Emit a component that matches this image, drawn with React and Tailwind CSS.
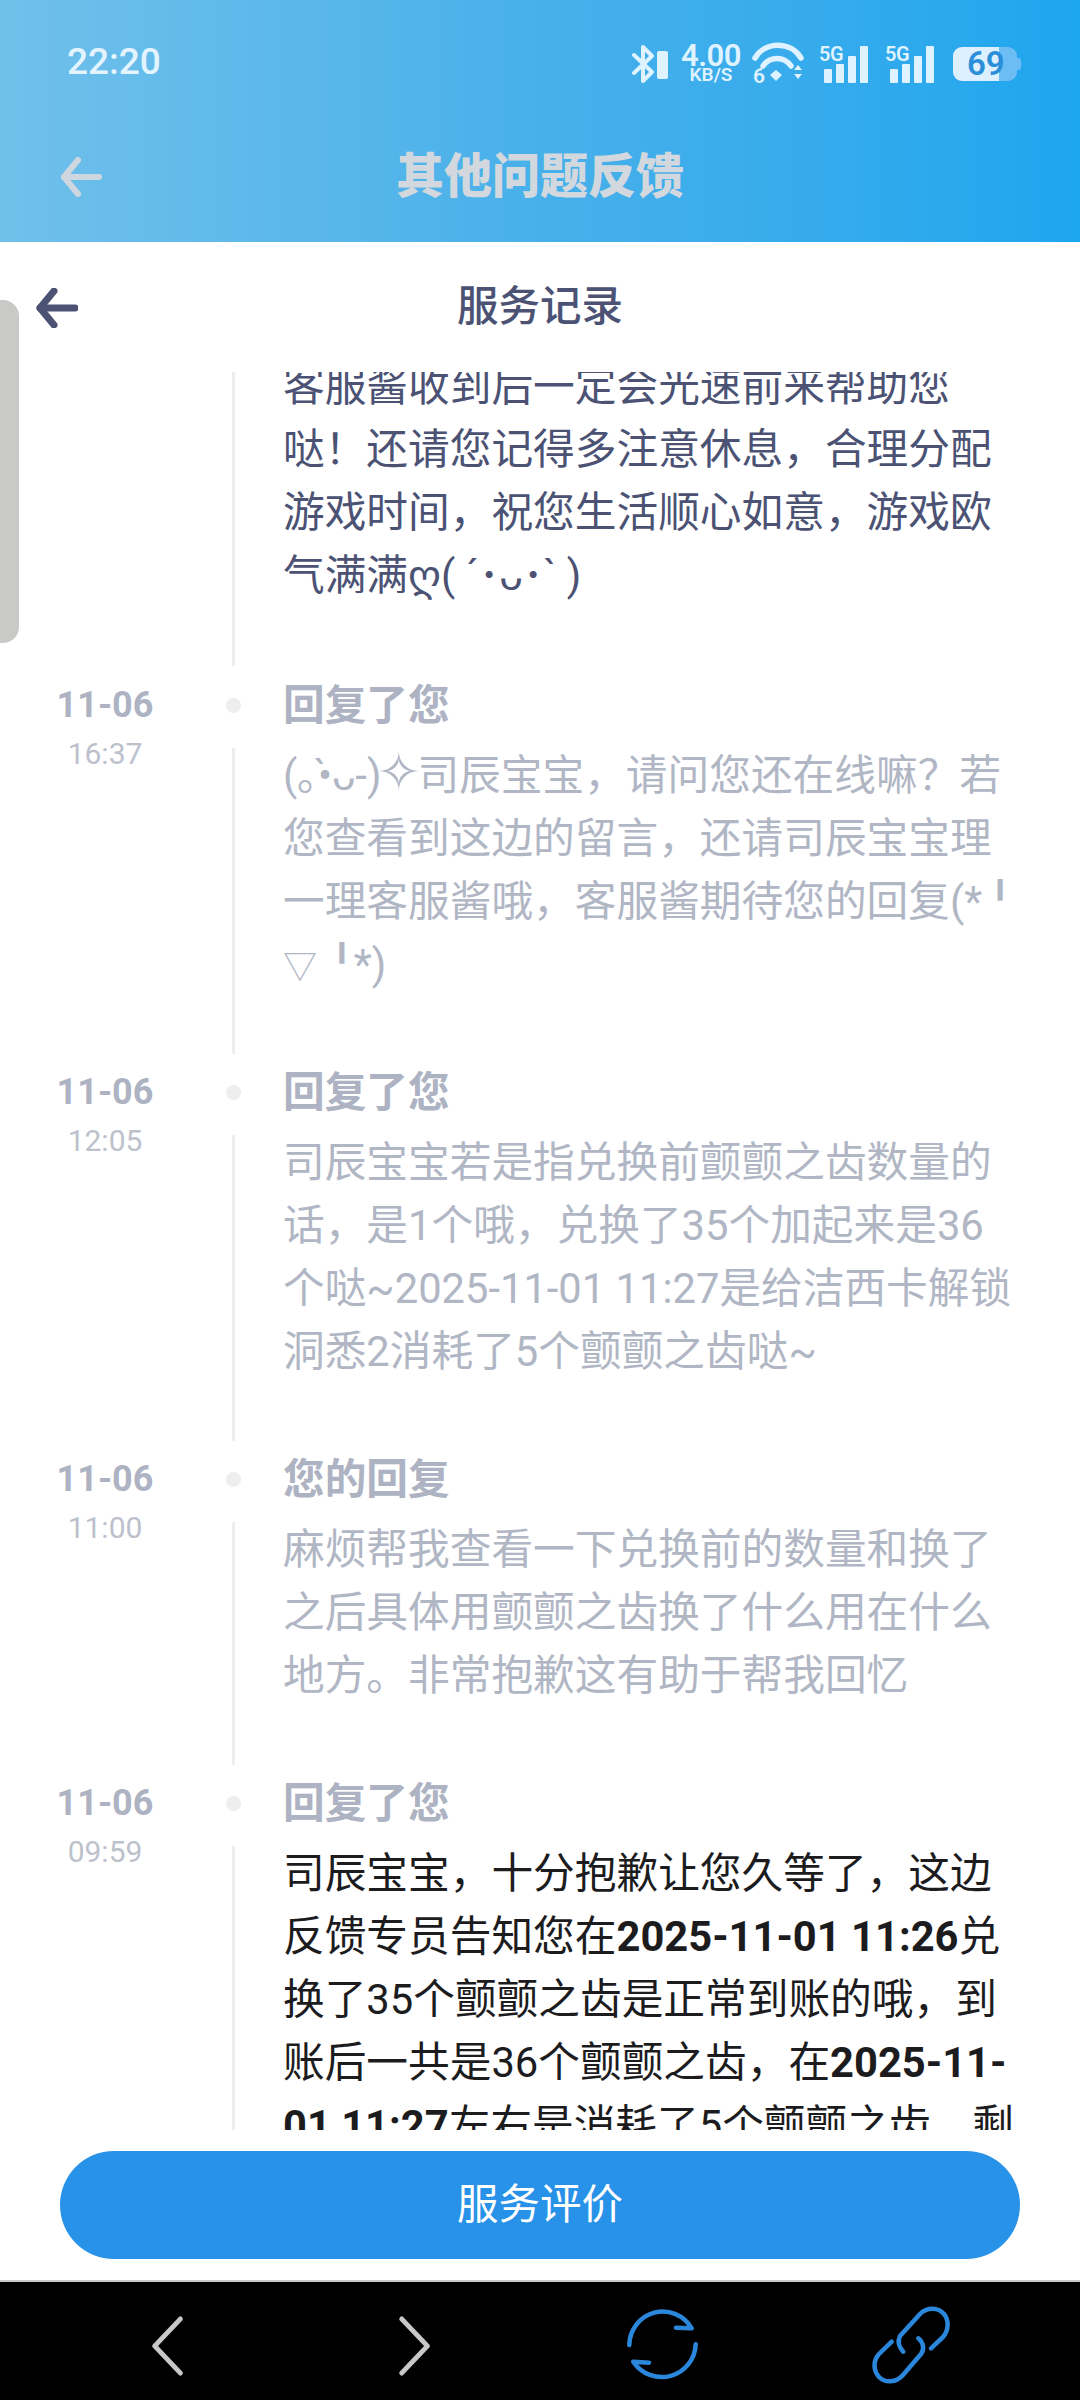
const FONT = { fontFamily: 'Roboto, "Noto Sans CJK SC", sans-serif' };

function Arrow({ color, width = 42, height = 40, sw = 6 }) {
  return (
    <svg width={width} height={height} viewBox="0 0 42 40" fill="none" stroke={color} strokeWidth={sw} strokeLinecap="round" strokeLinejoin="round">
      <path d="M39 20H4" />
      <path d="M18 3 4 20l14 17" />
    </svg>
  );
}

function Bars() {
  return (
    <svg width="50" height="37" viewBox="0 0 50 37" fill="#dff2ff">
      <rect x="5" y="23" width="8" height="14" rx="1" />
      <rect x="17" y="18" width="8" height="19" rx="1" />
      <rect x="29" y="10" width="8" height="27" rx="1" />
      <rect x="41" y="0" width="8" height="37" rx="1" />
    </svg>
  );
}

function StatusIcons() {
  return (
    <div className="flex items-center text-[#dff2ff]">
      <svg width="37" height="38" viewBox="0 0 37 38" fill="none" className="mr-[12px]">
        <path d="M2 10 20 27 11 36V2l9 9L2 28" stroke="#dff2ff" strokeWidth="4" strokeLinejoin="round" strokeLinecap="round" />
        <rect x="25" y="6" width="11" height="28" rx="2" fill="#dff2ff" />
      </svg>
      <div className="flex flex-col items-center w-[60px] font-semibold mr-[11px]">
        <span className="text-[31px] leading-[22px] tracking-[-0.5px]">4.00</span>
        <span className="text-[19px] leading-[16px]">KB/S</span>
      </div>
      <div className="relative w-[52px] h-[40px] mr-[15px]">
        <svg width="52" height="40" viewBox="0 0 52 40" fill="none" stroke="#dff2ff" strokeWidth="5.5" strokeLinecap="round" className="overflow-visible">
          <path d="M3 14C13 -3 39 -3 49 14" />
          <path d="M11 22c7-10 21-10 28 0" />
          <path d="M18 31l6-5 6 5-6 6z" fill="#dff2ff" stroke="none" />
          <path d="M46 21l-4 5h8zM46 35l-4-5h8z" fill="#dff2ff" stroke="none" />
        </svg>
        <span className="absolute left-[1px] top-[22px] text-[21px] leading-[20px] font-semibold">6</span>
      </div>
      <div className="relative w-[51px] h-[37px] mr-[15px]">
        <Bars />
        <span className="absolute left-0 top-0 text-[20px] leading-[17px] font-semibold tracking-[-0.5px]">5G</span>
      </div>
      <div className="relative w-[51px] h-[37px] mr-[17px]">
        <Bars />
        <span className="absolute left-0 top-0 text-[20px] leading-[17px] font-semibold tracking-[-0.5px]">5G</span>
      </div>
      <div className="relative w-[64px] h-[34px] rounded-[9px] bg-[#6cbdf4]">
        <div className="absolute left-0 top-0 bottom-0 w-[46px] rounded-l-[9px] bg-[#dcf0ff]" />
        <span className="absolute left-[14px] top-0 text-[33px] leading-[34px] font-semibold text-[#2a8fd8]">69</span>
        <div className="absolute right-[-4px] top-[11px] w-[4px] h-[12px] rounded-r-[3px] bg-[#6cbdf4]" />
      </div>
    </div>
  );
}

function Line({ parts, cls }) {
  return (
    <div className={"whitespace-nowrap h-[63px] leading-[63px] " + cls}>
      {parts.map((p, i) => {
        if (typeof p === "string") return <span key={i}>{p}</span>;
        if (p.b) return <b key={i} className="font-bold">{p.b}</b>;
        return <span key={i} className={p.c}>{p.s}</span>;
      })}
    </div>
  );
}

const ITEMS = [
  {
    date: "11-06", time: "16:37", title: "回复了您",
    lines: [
      ["(｡•̀ᴗ-)", { s: "✧", c: "text-[52px] leading-[40px] -mx-[4px]" }, "司辰宝宝，请问您还在线嘛？若"],
      ["您查看到这边的留言，还请司辰宝宝理"],
      ["一理客服酱哦，客服酱期待您的回复(*", { s: "╹", c: "-ml-[3px]" }],
      [{ s: "▽", c: "text-[34px] mr-[4px]" }, { s: "╹", c: "tracking-[-10px]" }, { s: "*)", c: "ml-[1px]" }],
    ],
    color: "text-[#b0b6c4]",
  },
  {
    date: "11-06", time: "12:05", title: "回复了您",
    lines: [["司辰宝宝若是指兑换前颤颤之齿数量的"], ["话，是1个哦，兑换了35个加起来是36"], ["个哒~2025-11-01 11:27是给洁西卡解锁"], ["洞悉2消耗了5个颤颤之齿哒~"]],
    color: "text-[#b0b6c4]",
  },
  {
    date: "11-06", time: "11:00", title: "您的回复",
    lines: [["麻烦帮我查看一下兑换前的数量和换了"], ["之后具体用颤颤之齿换了什么用在什么"], ["地方。非常抱歉这有助于帮我回忆"]],
    color: "text-[#b0b6c4]",
  },
  {
    date: "11-06", time: "09:59", title: "回复了您",
    lines: [
      ["司辰宝宝，十分抱歉让您久等了，这边"],
      ["反馈专员告知您在", { b: "2025-11-01 11:26" }, "兑"],
      ["换了35个颤颤之齿是正常到账的哦，到"],
      ["账后一共是36个颤颤之齿，在", { b: "2025-11-" }],
      [{ b: "01 11:27" }, "左右是消耗了5个颤颤之齿，剩"],
      ["余31个颤颤之齿哦"],
    ],
    color: "text-[#1c1c1e]",
  },
];

function Item({ item }) {
  return (
    <div className="flex">
      <div className="w-[210px] shrink-0 flex flex-col items-center pt-[9px]">
        <div className="text-[36px] leading-[44px] font-bold text-[#adb3c2]">{item.date}</div>
        <div className="text-[30px] leading-[44px] mt-[5px] text-[#bcc1cc]">{item.time}</div>
      </div>
      <div className="w-[46px] shrink-0 flex flex-col items-center pt-[24px] pb-[7px]">
        <div className="w-[15px] h-[15px] rounded-full bg-[#eeeeee] shrink-0" />
        <div className="w-[3px] flex-1 mt-[35px] bg-[#eeeeee]" />
      </div>
      <div className="ml-[27px] pb-[65px] text-[41.7px]">
        <div className="h-[70px] leading-[63px] font-bold text-[#adb3c2]">{item.title}</div>
        {item.lines.map((l, i) => <Line key={i} parts={l} cls={item.color} />)}
      </div>
    </div>
  );
}

export default function App() {
  return (
    <div className="w-[1080px] h-[2400px] flex flex-col bg-white overflow-hidden relative" style={FONT}>
      <header className="h-[242px] shrink-0 bg-gradient-to-r from-[#70c0ea] via-[#47b0ea] to-[#1da6ee]">
        <div className="h-[118px] pl-[67px] pr-[63px] flex items-start justify-between">
          <span className="mt-[40px] text-[37px] leading-[44px] font-medium text-[#e3f4ff]">22:20</span>
          <div className="mt-[44px]"><StatusIcons /></div>
        </div>
        <div className="h-[118px] relative flex items-center justify-center">
          <div className="absolute left-[60px] top-[39px]"><Arrow color="#ced7df" /></div>
          <span className="text-[48px] leading-[60px] font-black text-[#d2d8de]">其他问题反馈</span>
        </div>
      </header>

      <main className="flex-1 min-h-0 flex flex-col relative">
        <div className="absolute left-0 top-[58px] w-[19px] h-[343px] bg-[#c9c9c7] rounded-r-[16px]" />
        <div className="h-[130px] shrink-0 relative flex items-center justify-center">
          <div className="absolute left-[36px] top-[46px]"><Arrow color="#4b5274" sw={7} /></div>
          <span className="text-[41.5px] leading-[60px] font-medium text-[#4b5274]">服务记录</span>
        </div>
        <div className="flex-1 min-h-0 overflow-hidden">
          <div className="flex h-[302px]">
            <div className="w-[210px] shrink-0" />
            <div className="w-[46px] shrink-0 flex flex-col items-center pb-[8px]">
              <div className="w-[3px] flex-1 bg-[#eeeeee]" />
            </div>
            <div className="ml-[27px] -mt-[17px] text-[41.7px]">
              {[["客服酱收到后一定会光速前来帮助您"], ["哒！还请您记得多注意休息，合理分配"], ["游戏时间，祝您生活顺心如意，游戏欧"], ["气满满ღ( ´･ᴗ･` )"]].map((l, i) => (
                <Line key={i} parts={l} cls="text-[#4b5274]" />
              ))}
            </div>
          </div>
          {ITEMS.map((it, i) => <Item key={i} item={it} />)}
        </div>
        <div className="h-[150px] shrink-0 px-[60px] pt-[21px]">
          <button className="w-full h-[108px] rounded-full bg-[#2892e8] text-white text-[41.5px]">服务评价</button>
        </div>
      </main>

      <nav className="h-[120px] shrink-0 bg-black border-t-2 border-[#c9c9c9] relative flex items-center">
        <svg className="absolute left-[148px] top-[34px]" width="38" height="60" viewBox="0 0 38 60" fill="none" stroke="#c8c8c8" strokeWidth="5" strokeLinecap="round" strokeLinejoin="round">
          <path d="M33 3 6 30l27 27" transform="translate(1 0) scale(0.95 1)" />
        </svg>
        <svg className="absolute left-[396px] top-[34px]" width="38" height="60" viewBox="0 0 38 60" fill="none" stroke="#c8c8c8" strokeWidth="5" strokeLinecap="round" strokeLinejoin="round">
          <path d="M5 3 32 30 5 57" transform="translate(1 0) scale(0.95 1)" />
        </svg>
        <svg className="absolute left-[625px] top-[25px]" width="74" height="74" viewBox="0 0 74 74" fill="none" stroke="#2b87dc" strokeWidth="4.5" strokeLinecap="round" strokeLinejoin="round">
          <path d="M4.3 38A33.5 34 0 0 1 66.7 21.3L51 20.7" />
          <path d="M70.7 37.3A34 34 0 0 1 8.3 54.7L24 55.7" />
        </svg>
        <svg className="absolute left-[871px] top-[23px]" width="80" height="80" viewBox="0 0 80 80" fill="none" stroke="#2b87dc" strokeWidth="4.5" strokeLinecap="round" strokeLinejoin="round">
          <path d="M32.3 46.7C28 42 26 37 29 31L49 9C56 2 67 2 73 9 78 15 78 25 72 32L60 43.3" />
          <path d="M20.7 36.7 8 49C2 56 2 65 8 72 14 78 25 78 32 70L50 49C54 44 52 37 47.3 33.3" />
        </svg>
      </nav>
    </div>
  );
}
